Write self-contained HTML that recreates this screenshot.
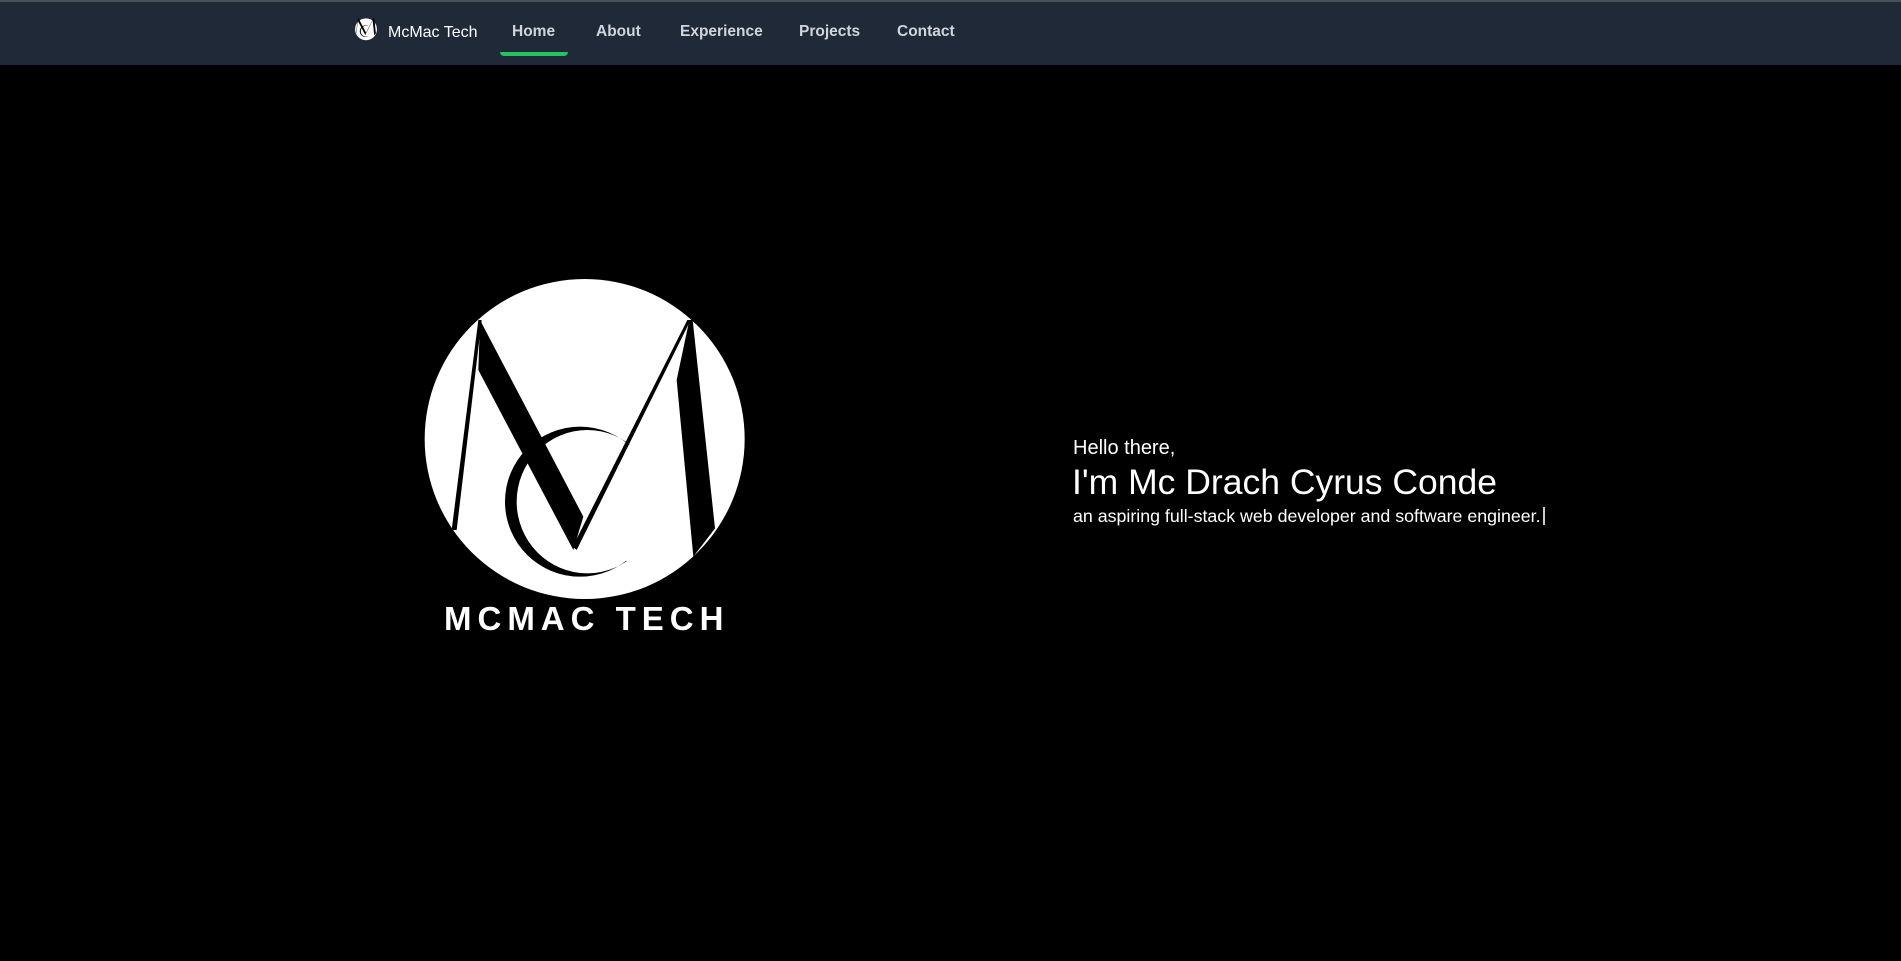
<!DOCTYPE html>
<html><head><meta charset="utf-8"><style>
*{margin:0;padding:0;box-sizing:border-box}
html,body{width:1901px;height:961px;background:#000;overflow:hidden;font-family:"Segoe UI","Liberation Sans","DejaVu Sans",sans-serif}
nav{position:absolute;left:0;top:0;width:1901px;height:65px;background:#1f2937;border-top:2px solid #4b5058}
.brand{position:absolute;left:388px;top:22px;color:#fff;font-size:16px}
.l{position:absolute;top:21px;color:#d1d5db;font-size:15.5px;font-weight:bold}
.ul{position:absolute;left:500px;top:50px;width:68px;height:4px;background:#22c55e;border-radius:0 0 4px 4px}
.t{position:absolute;color:#fff;white-space:nowrap}
</style></head><body>
<nav>
<svg style="position:absolute;left:354px;top:15px" width="24" height="28" viewBox="0 0 1050 1110">
<defs><clipPath id="c2"><polygon points="0,0 680,0 680,500 500,695 680,910 680,1110 0,1110"/></clipPath></defs>
<circle cx="525" cy="480" r="480" fill="#fff"/>
<g transform="translate(-50,-200) scale(1.1)">
<polygon points="205,150 215,150 140,780 125,780" fill="#000"/>
<polygon points="210,150 520,740 490,840 205,300" fill="#000"/>
<polygon points="832,150 842,150 500,840 488,830" fill="#000"/>
<polygon points="835,150 848,150 915,775 850,860 790,300" fill="#000"/>
<path clip-path="url(#c2)" fill-rule="evenodd" fill="#000" d="M275,695a230,230 0 1,0 460,0a230,230 0 1,0 -460,0ZM315,695a215,215 0 1,0 430,0a215,215 0 1,0 -430,0Z"/>
</g></svg>
<div class="brand">McMac Tech</div>
<div class="l" style="left:512px">Home</div>
<div class="l" style="left:596px">About</div>
<div class="l" style="left:680px">Experience</div>
<div class="l" style="left:799px">Projects</div>
<div class="l" style="left:897px">Contact</div>
<div class="ul"></div>
</nav>
<svg style="position:absolute;left:410px;top:270px" width="350" height="370" viewBox="0 0 1050 1110">
<defs><clipPath id="c"><polygon points="0,0 680,0 680,500 500,695 680,910 680,1110 0,1110"/></clipPath></defs>
<circle cx="524" cy="507" r="480" fill="#fff"/>
<polygon points="205,150 215,150 140,780 125,780" fill="#000"/>
<polygon points="210,150 520,740 490,840 205,300" fill="#000"/>
<polygon points="832,150 842,150 500,840 488,830" fill="#000"/>
<polygon points="838,150 848,150 915,775 850,860 800,330" fill="#000"/>
<path clip-path="url(#c)" fill-rule="evenodd" fill="#000" d="M285,695a225,225 0 1,0 450,0a225,225 0 1,0 -450,0ZM320,695a212,215 0 1,0 424,0a212,215 0 1,0 -424,0Z"/>
</svg>
<div class="t" style="left:444px;top:600px;font-size:33px;font-weight:bold;letter-spacing:6px;font-family:'Liberation Sans',sans-serif">MCMAC TECH</div>
<div class="t" style="left:1073px;top:437px;font-size:20px">Hello there,</div>
<div class="t" style="left:1072px;top:462px;font-size:35.5px">I'm Mc Drach Cyrus Conde</div>
<div class="t" style="left:1073px;top:506px;font-size:17.8px">an aspiring full-stack web developer and software engineer.<span style="display:inline-block;width:2px;height:18px;background:#ccc;vertical-align:-3px;margin-left:2px"></span></div>
</body></html>
